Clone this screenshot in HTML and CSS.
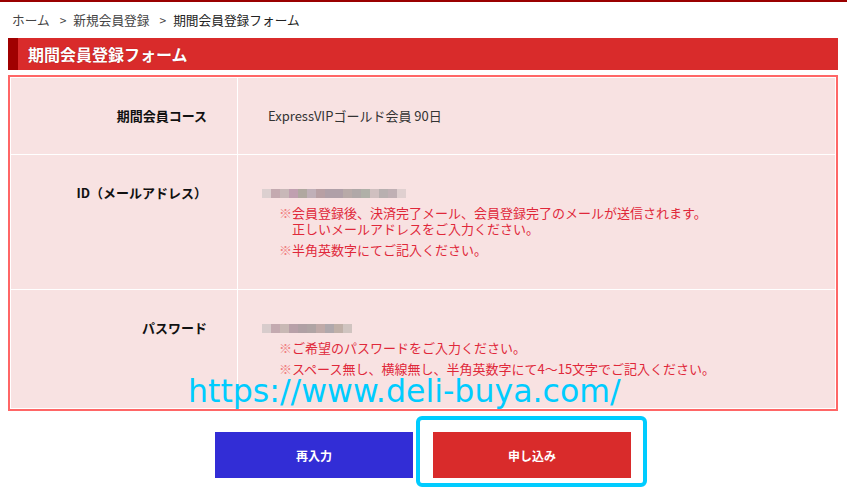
FILE: index.html
```html
<!DOCTYPE html>
<html lang="ja">
<head>
<meta charset="utf-8">
<title>期間会員登録フォーム</title>
<link rel="stylesheet" href="styles.css">
</head>
<body>
<div class="topline"></div>
<div class="page">
  <nav class="crumbs">
    <span class="crumb">ホーム</span><span class="sep">&gt;</span><span class="crumb">新規会員登録</span><span class="sep">&gt;</span><span class="crumb current">期間会員登録フォーム</span>
  </nav>
  <h1 class="title">期間会員登録フォーム</h1>
  <table class="form">
    <tr>
      <th>期間会員コース</th>
      <td>ExpressVIPゴールド会員 90日</td>
    </tr>
    <tr>
      <th>ID（メールアドレス）</th>
      <td class="field">
        <div class="mask mask-id"></div>
        <ul class="notes">
          <li><span class="kome">※</span>会員登録後、決済完了メール、会員登録完了のメールが送信されます。<br>正しいメールアドレスをご入力ください。</li>
          <li><span class="kome">※</span>半角英数字にてご記入ください。</li>
        </ul>
      </td>
    </tr>
    <tr>
      <th>パスワード</th>
      <td class="field">
        <div class="mask mask-pw"></div>
        <ul class="notes">
          <li><span class="kome">※</span>ご希望のパスワードをご入力ください。</li>
          <li><span class="kome">※</span>スペース無し、横線無し、半角英数字にて4～15文字でご記入ください。</li>
        </ul>
      </td>
    </tr>
  </table>
  <div class="actions">
    <button class="btn btn-reset" type="button">再入力</button>
    <button class="btn btn-submit" type="button">申し込み</button>
  </div>
</div>
<div class="watermark">https://www.deli-buya.com/</div>
<div class="highlight"></div>
</body>
</html>
```

FILE: styles.css
```css
html, body {
  margin: 0;
  padding: 0;
  background: #fff;
}
body {
  position: relative;
  width: 847px;
  height: 492px;
  overflow: hidden;
  font-family: "Noto Sans CJK JP", "Noto Sans", sans-serif;
  color: #333;
}
.topline {
  height: 2px;
  background: #9a0000;
}
.page {
  padding: 0 9px 0 8px;
}
.crumbs {
  padding: 9px 0 0 4px;
  font-size: 12.7px;
  line-height: 18px;
  color: #444;
}
.sep {
  margin: 0 7px 0 10px;
  font-size: 12px;
}
.crumb.current {
  color: #222;
}
.title {
  margin: 9px 0 0;
  height: 32px;
  box-sizing: border-box;
  border-left: 10px solid #a00000;
  background: #d92b2b;
  padding-left: 10px;
  color: #fff;
  font-size: 16px;
  font-weight: bold;
  line-height: 32px;
  text-shadow: 0 0 1px rgba(80,0,0,0.5);
}
.form {
  margin-top: 5px;
  width: 100%;
  table-layout: fixed;
  border-collapse: separate;
  border-spacing: 1px;
  border: 2px solid #ff6666;
  background: #fff;
  font-size: 13px;
  line-height: 18px;
}
.form th,
.form td {
  background: #f8e2e2;
  vertical-align: top;
  padding: 29px 30px;
}
.form td.field {
  padding-bottom: 31px;
}
.form th {
  box-sizing: border-box;
  width: 226px;
  padding-left: 0;
  text-align: right;
  font-weight: bold;
  color: #111;
}
.form td {
  color: #333;
}
.mask {
  height: 9px;
  margin: 5px 0 7px -6px;
}
.mask-id {
  width: 144px;
  background: linear-gradient(to right,
    #dcd0d0 0 9px, #c4aab0 9px 18px, #c8b8b8 18px 27px, #c0a0b0 27px 36px,
    #b0a8a0 36px 45px, #c0b0b8 45px 54px, #b8a0a4 54px 63px, #b0a0a8 63px 72px,
    #b0a0a8 72px 81px, #b8aaa8 81px 90px, #b0a8a8 90px 99px, #b0b0a8 99px 108px,
    #d0c0c0 108px 117px, #b8b0b0 117px 126px, #c0b0b4 126px 135px, #e0d0d0 135px 144px);
}
.mask-pw {
  width: 90px;
  background: linear-gradient(to right,
    #d8cccc 0 9px, #c4aab0 9px 18px, #c8b8b4 18px 27px, #b8a0a8 27px 36px,
    #b0a0a4 36px 45px, #b0a4a4 45px 54px, #c0aaa8 54px 63px, #b0a8ac 63px 72px,
    #c0b0a8 72px 81px, #d0c4c0 81px 90px);
}
.notes {
  list-style: none;
  margin: 0 0 0 11px;
  padding: 0;
  font-size: 13px;
  line-height: 16px;
  color: #e0283a;
}
.notes li {
  padding-left: 13px;
  text-indent: -13px;
}
.notes li + li {
  margin-top: 5px;
}
.kome {
  color: #f08080;
}
.actions {
  display: flex;
  justify-content: center;
  gap: 20px;
  margin-top: 21px;
}
.btn {
  width: 198px;
  height: 46px;
  border: 0;
  margin: 0;
  padding: 0;
  color: #fff;
  font-family: "Noto Sans CJK JP", sans-serif;
  font-size: 12px;
  font-weight: bold;
  cursor: pointer;
}
.btn-reset {
  background: #322dd6;
}
.btn-submit {
  background: #d92b2b;
}
.watermark {
  position: absolute;
  left: 188px;
  top: 376px;
  font-family: "DejaVu Sans", sans-serif;
  font-size: 31.6px;
  line-height: 31px;
  color: #00ccff;
  white-space: nowrap;
}
.highlight {
  position: absolute;
  left: 416px;
  top: 416px;
  width: 231px;
  height: 71px;
  box-sizing: border-box;
  border: 4px solid #00ccff;
  border-radius: 6px;
}
```
